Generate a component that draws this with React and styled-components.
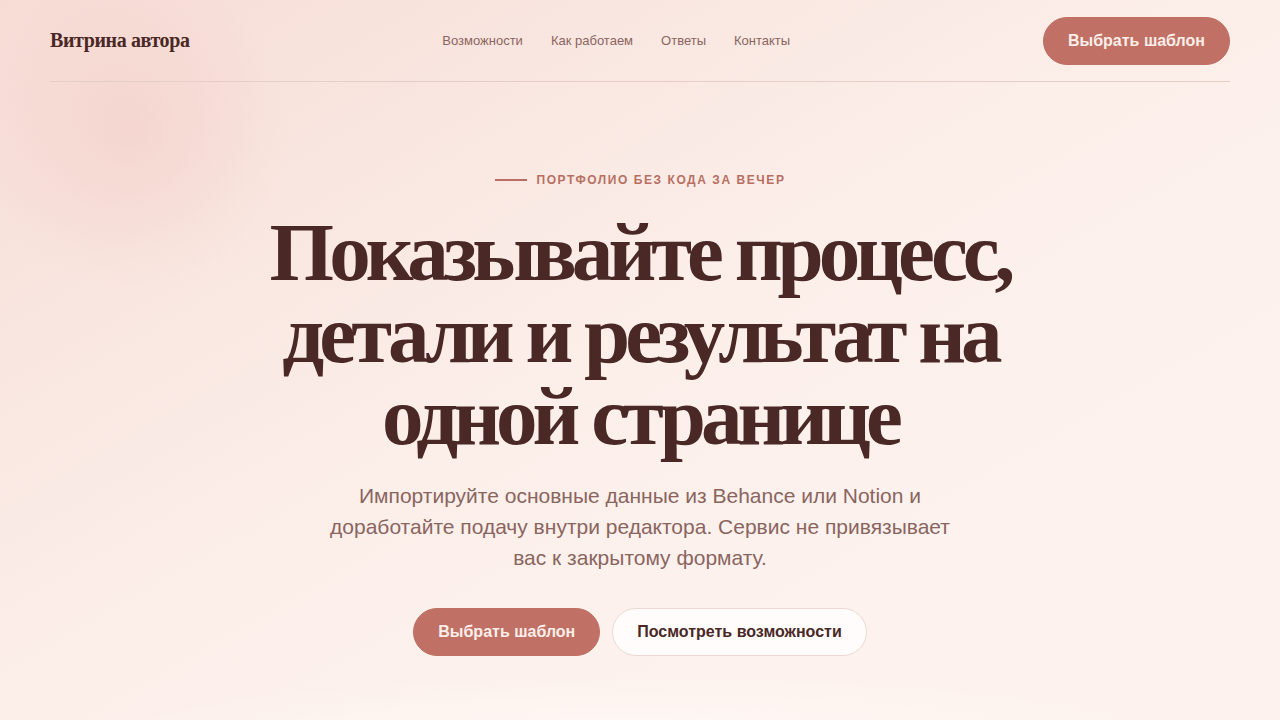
import React from "react";
import styled, { createGlobalStyle } from "styled-components";

const Global = createGlobalStyle`
  html, body { margin: 0; padding: 0; }
  body {
    font-family: "Liberation Sans", Arial, sans-serif;
    background: #fcefea;
    min-height: 720px;
  }
  * { box-sizing: border-box; }
`;

const Page = styled.div`
  min-height: 720px;
  position: relative;
  overflow: hidden;
  background:
    radial-gradient(circle at 130px 130px, rgba(240, 196, 190, 0.4) 0, rgba(240, 196, 190, 0) 160px),
    radial-gradient(ellipse 560px 70px at 640px 745px, rgba(255, 250, 247, 0.9), rgba(255, 250, 247, 0)),
    linear-gradient(150deg, #f6dcd5 0%, #f9e6e0 25%, #fcefea 50%, #fdf2ee 75%, #fdf2ee 100%);
`;

const Header = styled.header`
  margin: 0 50px;
  height: 82px;
  border-bottom: 1px solid #e5cdc8;
  display: flex;
  justify-content: space-between;
  align-items: center;
`;

const Logo = styled.div`
  font-family: "Liberation Serif", "Times New Roman", serif;
  font-weight: 700;
  font-size: 20px;
  letter-spacing: -0.02em;
  color: #4a2826;
`;

const Nav = styled.nav`
  display: flex;
  gap: 28px;
`;

const NavLink = styled.a`
  font-size: 13px;
  color: #8a6560;
  text-decoration: none;
`;

const Button = styled.button`
  height: 48px;
  padding: 0 24px;
  border-radius: 24px;
  font-family: "Liberation Sans", Arial, sans-serif;
  font-weight: 700;
  font-size: 16px;
  cursor: pointer;
  border: 1px solid ${(p) => (p.$ghost ? "#ecd9d4" : "#c07064")};
  background: ${(p) => (p.$ghost ? "#fffcfb" : "#c07064")};
  color: ${(p) => (p.$ghost ? "#4a2826" : "#fdeee9")};
`;

const Hero = styled.main`
  display: flex;
  flex-direction: column;
  align-items: center;
  padding-top: 91px;
`;

const Eyebrow = styled.div`
  display: flex;
  align-items: center;
  gap: 10px;
  height: 14px;
  font-size: 12px;
  font-weight: 700;
  letter-spacing: 0.13em;
  color: #b86f62;
  text-transform: uppercase;
  &::before {
    content: "";
    width: 32px;
    height: 2px;
    background: #b86f62;
  }
`;

const Title = styled.h1`
  margin: 24px 0 0;
  font-family: "Liberation Serif", "Times New Roman", serif;
  font-weight: 700;
  font-size: 83px;
  line-height: 82px;
  letter-spacing: -0.06em;
  color: #4a2826;
  text-align: center;
  max-width: 800px;
`;

const Lead = styled.p`
  margin: 23px 0 0;
  font-size: 21px;
  line-height: 31px;
  color: #8a6560;
  text-align: center;
  max-width: 640px;
`;

const Actions = styled.div`
  display: flex;
  gap: 12px;
  margin-top: 35px;
`;

export default function App() {
  return (
    <Page>
      <Global />
      <Header>
        <Logo>Витрина автора</Logo>
        <Nav>
          <NavLink href="#">Возможности</NavLink>
          <NavLink href="#">Как работаем</NavLink>
          <NavLink href="#">Ответы</NavLink>
          <NavLink href="#">Контакты</NavLink>
        </Nav>
        <Button>Выбрать шаблон</Button>
      </Header>
      <Hero>
        <Eyebrow>Портфолио без кода за вечер</Eyebrow>
        <Title>Показывайте процесс, детали и результат на одной странице</Title>
        <Lead>
          Импортируйте основные данные из Behance или Notion и доработайте подачу внутри редактора. Сервис не привязывает вас к закрытому формату.
        </Lead>
        <Actions>
          <Button>Выбрать шаблон</Button>
          <Button $ghost>Посмотреть возможности</Button>
        </Actions>
      </Hero>
    </Page>
  );
}
